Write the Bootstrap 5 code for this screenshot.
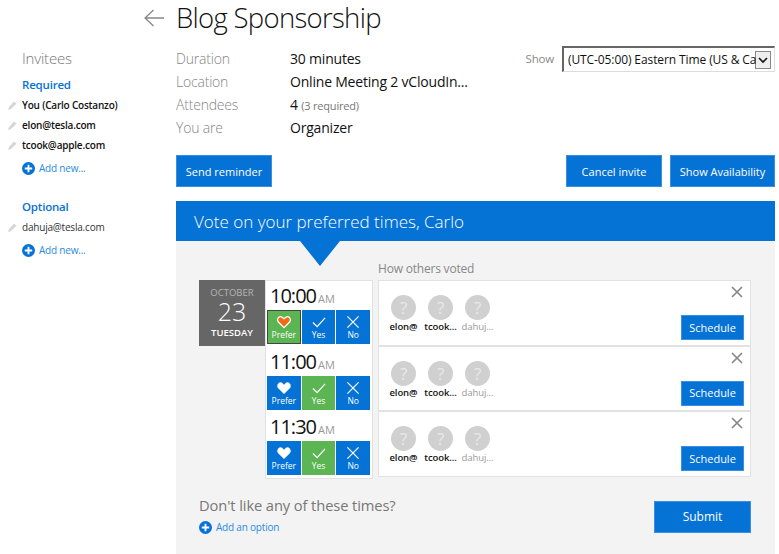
<!DOCTYPE html>
<html lang="en">
<head>
    <meta charset="UTF-8">
    <meta name="viewport" content="width=device-width, initial-scale=1.0">
    <title>Blog Sponsorship</title>
    <link rel="stylesheet" href="https://cdn.jsdelivr.net/npm/bootstrap@5.3.3/dist/css/bootstrap.min.css">
    <style>
        body { font-family: "Open Sans", "Noto Sans", sans-serif; background: #fff; color: #111; width: 779px; height: 554px; overflow: hidden; letter-spacing: -0.2px; }
        .side-col { width: 176px; flex: none; padding: 48px 0 0 8px; }
        .main-col { width: 599px; flex: none; }
        .title-row { height: 40px; margin-left: -32px; padding-bottom: 4px; }
        .title-row h1 { font-size: 27.5px; font-weight: 300; margin: 0 0 0 12px; line-height: 36px; letter-spacing: -0.7px; }
        .invitees { font-size: 15px; font-weight: 300; color: #777; margin: 0 0 0 14px; line-height: 20px; }
        .group-name { font-size: 11.5px; font-weight: 600; color: #0572d6; margin: 8px 0 1px 14px; line-height: 18px; }
        .group-name.second { margin-top: 19px; }
        .person { font-size: 10px; font-weight: 600; height: 20px; line-height: 20px; white-space: nowrap; }
        .person.plain { font-weight: 400; color: #333; }
        .person svg { margin-right: 5px; flex: none; }
        .add-link { font-size: 10px; color: #2a8be2; height: 22px; margin: 2px 0 0 14px; gap: 4px; }
        .plus-icon { flex: none; }
        .details { padding-top: 7px; height: 115px; }
        .details .detail-row { height: 23px; line-height: 23px; font-size: 14px; }
        .detail-label { width: 114px; color: #858585; font-weight: 300; }
        .detail-note { font-size: 11px; color: #777; }
        .tz-label { font-size: 11.5px; color: #888; margin-right: 8px; }
        .tz-select { width: 213px; height: 26px; font-size: 12px; padding: 0 18px 0 4px; border-radius: 0; border: 1px solid #ddd; border-top: 2px solid #666; border-left: 2px solid #666; color: #111; font-family: inherit; letter-spacing: -0.1px;
            background-position: right 3px center; background-size: 16px 18px;
            background-image: url("data:image/svg+xml,%3Csvg xmlns='http://www.w3.org/2000/svg' viewBox='0 0 16 18'%3E%3Crect x='.5' y='.5' width='15' height='17' fill='%23eee' stroke='%23888'/%3E%3Cpath d='M4 7l4 4 4-4' fill='none' stroke='%23111' stroke-width='1.6'/%3E%3C/svg%3E"); }
        .tz-wrap { align-self: flex-start; margin-top: -1px; }
        .btn-blue { background: #0572d6; color: #fff; border: 1px solid #3a8fe0; border-radius: 0; font-size: 11px; padding: 0; height: 32px; line-height: 29px; }
        .btn-blue:hover { background: #0465bd; color: #fff; }
        .action-row { height: 46px; }
        .w-send { width: 96px; }
        .w-cancel { width: 96px; }
        .w-show { width: 105px; }
        .vote-head { background: #0572d6; color: #fff; height: 40px; font-size: 17px; font-weight: 300; line-height: 41px; padding-left: 18px; letter-spacing: 0; }
        .vote-body { background: #f3f3f3; height: 313px; position: relative; padding: 19px 24px 0 23px; }
        .vote-arrow { position: absolute; left: 124px; top: 0; width: 0; height: 0; border-left: 20px solid transparent; border-right: 20px solid transparent; border-top: 25px solid #0572d6; }
        .others-title { font-size: 12px; color: #888; margin-left: 179px; line-height: 18px; height: 20px; }
        .date-tile { width: 66px; height: 66px; background: #666; color: #fff; flex: none; text-align: center; padding-top: 7px; }
        .date-month { font-size: 9.5px; line-height: 12px; color: #b5b5b5; letter-spacing: 0; }
        .date-day { font-size: 25px; font-weight: 300; line-height: 24px; margin-bottom: 3px; letter-spacing: 0; }
        .date-week { font-size: 9.5px; font-weight: 600; line-height: 14px; letter-spacing: 0; }
        .time-col { width: 108px; flex: none; border: 1px solid #e2e2e2; background: #fff; margin-right: 5px; }
        .time-slot { height: 65.5px; padding: 0 1px; }
        .time-text { font-size: 20px; line-height: 29px; padding-left: 3px; height: 29px; letter-spacing: -1px; }
        .time-text span { font-size: 11px; color: #999; margin-left: 2px; letter-spacing: 0; }
        .vote-btn { width: 34px; height: 34px; background: #0572d6; color: #fff; font-size: 8.5px; line-height: 10px; text-align: center; padding-top: 5px; margin-right: 1px; letter-spacing: 0; }
        .vote-btn svg { display: block; margin: 0 auto 1px; height: 14px; }
        .vote-btn.picked { background: #5cb553; }
        .vote-btn.chosen { background: #5cb553; outline: 1px solid #444; outline-offset: -1px; }
        .others-col { width: 373px; flex: none; }
        .others-row { height: 65.67px; background: #fff; border: 1px solid #e2e2e2; padding: 0 6px; }
        .voter { width: 37px; text-align: center; font-size: 9.5px; font-weight: 600; white-space: nowrap; line-height: 12px; padding-top: 14px; letter-spacing: -0.1px; }
        .voter.opt { font-weight: 400; color: #999; }
        .voter-face { width: 25px; height: 25px; border-radius: 50%; background: #d0d0d0; color: #e9e9e9; font-size: 17px; line-height: 25px; font-weight: 400; margin: 0 auto 1px; }
        .btn-sched { width: 63px; height: 25px; line-height: 22px; font-size: 11px; }
        .close-x { margin: 5px 1px 17px 0; }
        .bottom-row { padding-top: 16px; }
        .dislike { font-size: 14.7px; color: #777; line-height: 20px; margin: 0; letter-spacing: -0.1px; }
        .add-option { font-size: 10px; color: #2a8be2; margin-top: 5px; gap: 4px; }
        .btn-submit { width: 97px; font-size: 12px; margin-top: 6px; }
    </style>
</head>
<body>
    <div class="d-flex">
        <!-- Invitee list -->
        <div class="side-col">
            <p class="invitees">Invitees</p>
            <p class="group-name">Required</p>
            <div class="person d-flex align-items-center"><svg width="9" height="9" viewBox="0 0 9 9"><path d="M0 9l1-3 5-5.500 2.500 2.200-5.500 5.300z" fill="#d6d6d6"/></svg>You (Carlo Costanzo)</div>
            <div class="person d-flex align-items-center"><svg width="9" height="9" viewBox="0 0 9 9"><path d="M0 9l1-3 5-5.500 2.500 2.200-5.500 5.300z" fill="#d6d6d6"/></svg>elon@tesla.com</div>
            <div class="person d-flex align-items-center"><svg width="9" height="9" viewBox="0 0 9 9"><path d="M0 9l1-3 5-5.500 2.500 2.200-5.500 5.300z" fill="#d6d6d6"/></svg>tcook@apple.com</div>
            <div class="add-link d-flex align-items-center"><svg class="plus-icon" width="13" height="13" viewBox="0 0 14 14"><circle cx="7" cy="7" r="7" fill="#0572d6"/><path d="M7 3v8M3 7h8" stroke="#fff" stroke-width="2"/></svg>Add new...</div>
            <p class="group-name second">Optional</p>
            <div class="person plain d-flex align-items-center"><svg width="9" height="9" viewBox="0 0 9 9"><path d="M0 9l1-3 5-5.500 2.500 2.200-5.500 5.300z" fill="#d6d6d6"/></svg>dahuja@tesla.com</div>
            <div class="add-link d-flex align-items-center"><svg class="plus-icon" width="13" height="13" viewBox="0 0 14 14"><circle cx="7" cy="7" r="7" fill="#0572d6"/><path d="M7 3v8M3 7h8" stroke="#fff" stroke-width="2"/></svg>Add new...</div>
        </div>

        <div class="main-col">
            <div class="title-row d-flex align-items-center">
                <svg width="20" height="18" viewBox="0 0 20 18"><path d="M20 9H1M9.500 1L1 9l8.500 8" fill="none" stroke="#888" stroke-width="1.300"/></svg>
                <h1>Blog Sponsorship</h1>
            </div>

            <div class="details d-flex justify-content-between">
                <div>
                    <div class="detail-row d-flex"><div class="detail-label">Duration</div><div>30 minutes</div></div>
                    <div class="detail-row d-flex"><div class="detail-label">Location</div><div>Online Meeting 2 vCloudIn...</div></div>
                    <div class="detail-row d-flex"><div class="detail-label">Attendees</div><div>4 <span class="detail-note">(3 required)</span></div></div>
                    <div class="detail-row d-flex"><div class="detail-label">You are</div><div>Organizer</div></div>
                </div>
                <div class="tz-wrap d-flex align-items-center">
                    <span class="tz-label">Show</span>
                    <select class="form-select tz-select"><option>(UTC-05:00) Eastern Time (US &amp; Canada)</option></select>
                </div>
            </div>

            <div class="action-row d-flex">
                <button class="btn btn-blue w-send">Send reminder</button>
                <button class="btn btn-blue w-cancel ms-auto me-2">Cancel invite</button>
                <button class="btn btn-blue w-show">Show Availability</button>
            </div>

            <div class="vote-head">Vote on your preferred times, Carlo</div>
            <div class="vote-body">
                <div class="vote-arrow"></div>
                <div class="others-title">How others voted</div>
                <div class="d-flex">
                    <div class="date-tile">
                        <div class="date-month">OCTOBER</div>
                        <div class="date-day">23</div>
                        <div class="date-week">TUESDAY</div>
                    </div>
                    <div class="time-col">
                        <div class="time-slot">
                            <div class="time-text">10:00<span>AM</span></div>
                            <div class="d-flex">
                                <div class="vote-btn chosen"><svg width="16" height="15" viewBox="0 0 16 15"><path d="M8 13.500L2 7.500C-.5 4 3.500 0 6 2.500L8 4l2-1.500C12.500 0 16.500 4 14 7.500z" fill="#f26a12" stroke="#fff" stroke-width="1.400"/></svg>Prefer</div>
                                <div class="vote-btn"><svg width="16" height="15" viewBox="0 0 16 15"><path d="M1.500 8l4.500 4.500L14.500 3" fill="none" stroke="#fff" stroke-width="1.300"/></svg>Yes</div>
                                <div class="vote-btn"><svg width="16" height="15" viewBox="0 0 16 15"><path d="M2 1.500l12 12M14 1.500l-12 12" fill="none" stroke="#fff" stroke-width="1.300"/></svg>No</div>
                            </div>
                        </div>
                        <div class="time-slot">
                            <div class="time-text">11:00<span>AM</span></div>
                            <div class="d-flex">
                                <div class="vote-btn"><svg width="16" height="15" viewBox="0 0 16 15"><path d="M8 14L1.500 7.500C-1 4 3.500-.5 6 2L8 4l2-2c2.500-2.500 7 2 4.500 5.500z" fill="#fff"/></svg>Prefer</div>
                                <div class="vote-btn picked"><svg width="16" height="15" viewBox="0 0 16 15"><path d="M1.500 8l4.500 4.500L14.500 3" fill="none" stroke="#fff" stroke-width="1.300"/></svg>Yes</div>
                                <div class="vote-btn"><svg width="16" height="15" viewBox="0 0 16 15"><path d="M2 1.500l12 12M14 1.500l-12 12" fill="none" stroke="#fff" stroke-width="1.300"/></svg>No</div>
                            </div>
                        </div>
                        <div class="time-slot">
                            <div class="time-text">11:30<span>AM</span></div>
                            <div class="d-flex">
                                <div class="vote-btn"><svg width="16" height="15" viewBox="0 0 16 15"><path d="M8 14L1.500 7.500C-1 4 3.500-.5 6 2L8 4l2-2c2.500-2.500 7 2 4.500 5.500z" fill="#fff"/></svg>Prefer</div>
                                <div class="vote-btn picked"><svg width="16" height="15" viewBox="0 0 16 15"><path d="M1.500 8l4.500 4.500L14.500 3" fill="none" stroke="#fff" stroke-width="1.300"/></svg>Yes</div>
                                <div class="vote-btn"><svg width="16" height="15" viewBox="0 0 16 15"><path d="M2 1.500l12 12M14 1.500l-12 12" fill="none" stroke="#fff" stroke-width="1.300"/></svg>No</div>
                            </div>
                        </div>
                    </div>
                    <div class="others-col">
                        <div class="others-row d-flex justify-content-between">
                            <div class="d-flex">
                                <div class="voter"><div class="voter-face">?</div>elon@</div>
                                <div class="voter"><div class="voter-face">?</div>tcook...</div>
                                <div class="voter opt"><div class="voter-face">?</div>dahuj...</div>
                            </div>
                            <div class="d-flex flex-column align-items-end">
                                <svg class="close-x" width="12" height="12" viewBox="0 0 12 12"><path d="M1 1l10 10M11 1L1 11" stroke="#888" stroke-width="1.700"/></svg>
                                <button class="btn btn-blue btn-sched">Schedule</button>
                            </div>
                        </div>
                        <div class="others-row d-flex justify-content-between">
                            <div class="d-flex">
                                <div class="voter"><div class="voter-face">?</div>elon@</div>
                                <div class="voter"><div class="voter-face">?</div>tcook...</div>
                                <div class="voter opt"><div class="voter-face">?</div>dahuj...</div>
                            </div>
                            <div class="d-flex flex-column align-items-end">
                                <svg class="close-x" width="12" height="12" viewBox="0 0 12 12"><path d="M1 1l10 10M11 1L1 11" stroke="#888" stroke-width="1.700"/></svg>
                                <button class="btn btn-blue btn-sched">Schedule</button>
                            </div>
                        </div>
                        <div class="others-row d-flex justify-content-between">
                            <div class="d-flex">
                                <div class="voter"><div class="voter-face">?</div>elon@</div>
                                <div class="voter"><div class="voter-face">?</div>tcook...</div>
                                <div class="voter opt"><div class="voter-face">?</div>dahuj...</div>
                            </div>
                            <div class="d-flex flex-column align-items-end">
                                <svg class="close-x" width="12" height="12" viewBox="0 0 12 12"><path d="M1 1l10 10M11 1L1 11" stroke="#888" stroke-width="1.700"/></svg>
                                <button class="btn btn-blue btn-sched">Schedule</button>
                            </div>
                        </div>
                    </div>
                </div>
                <div class="bottom-row d-flex justify-content-between">
                    <div>
                        <p class="dislike">Don't like any of these times?</p>
                        <div class="add-option d-flex align-items-center"><svg class="plus-icon" width="13" height="13" viewBox="0 0 14 14"><circle cx="7" cy="7" r="7" fill="#0572d6"/><path d="M7 3v8M3 7h8" stroke="#fff" stroke-width="2"/></svg>Add an option</div>
                    </div>
                    <button class="btn btn-blue btn-submit">Submit</button>
                </div>
            </div>
        </div>
    </div>
    <script src="https://cdn.jsdelivr.net/npm/bootstrap@5.3.3/dist/js/bootstrap.bundle.min.js"></script>
</body>
</html>
